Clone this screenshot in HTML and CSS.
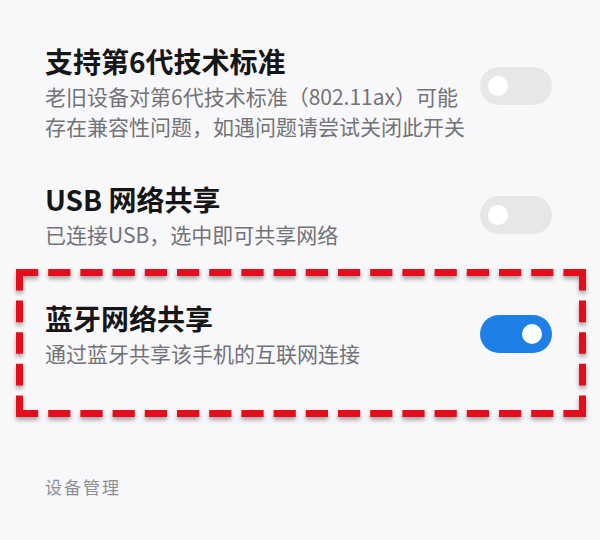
FILE: index.html
```html
<!DOCTYPE html>
<html lang="zh-CN">
<head>
<meta charset="utf-8">
<title>连接与共享</title>
<link rel="stylesheet" href="styles.css">
</head>
<body>
<main class="settings">
  <div class="row">
    <div class="text">
      <div class="title">支持第6代技术标准</div>
      <div class="desc">老旧设备对第6代技术标准（802.11ax）可能<br>存在兼容性问题，如遇问题请尝试关闭此开关</div>
    </div>
    <span class="switch switch-raised"><span class="knob"></span></span>
  </div>

  <div class="row">
    <div class="text">
      <div class="title">USB 网络共享</div>
      <div class="desc">已连接USB，选中即可共享网络</div>
    </div>
    <span class="switch"><span class="knob"></span></span>
  </div>

  <div class="row row-marked">
    <div class="text">
      <div class="title">蓝牙网络共享</div>
      <div class="desc">通过蓝牙共享该手机的互联网连接</div>
    </div>
    <span class="switch on"><span class="knob"></span></span>
    <svg class="mark" width="570" height="148" viewBox="0 0 570 148" aria-hidden="true">
      <g stroke="#e50d1c" stroke-width="7" fill="none">
        <line x1="0" y1="3.5" x2="570" y2="3.5" stroke-dasharray="22.2 10"/>
        <line x1="0" y1="144.5" x2="570" y2="144.5" stroke-dasharray="22.2 10"/>
        <line x1="3.5" y1="0" x2="3.5" y2="148" stroke-dasharray="21.6 10"/>
        <line x1="566.5" y1="0" x2="566.5" y2="148" stroke-dasharray="21.6 10"/>
      </g>
    </svg>
  </div>

  <div class="section">设备管理</div>
</main>
</body>
</html>
```

FILE: styles.css
```css
html, body {
  margin: 0;
  background: #f8f8fa;
}

body {
  width: 600px;
  height: 540px;
  overflow: hidden;
  font-family: "Noto Sans CJK SC", "Noto Sans", sans-serif;
}

.settings {
  display: flex;
  flex-direction: column;
  gap: 40px;
  padding: 43px 48px 0 45px;
}

.row {
  position: relative;
  display: flex;
  align-items: center;
  justify-content: space-between;
}

.row-marked {
  margin-top: 11px;
}

.text {
  display: flex;
  flex-direction: column;
  gap: 2px;
}

.title {
  font-size: 28px;
  line-height: 36px;
  font-weight: 600;
  color: #161616;
}

.desc {
  font-size: 21px;
  line-height: 30px;
  color: #727378;
}

.switch {
  position: relative;
  flex: none;
  width: 72px;
  height: 38px;
  border-radius: 19px;
  background: #e6e7e9;
}

.switch-raised {
  margin-bottom: 12px;
}

.knob {
  position: absolute;
  top: 9px;
  left: 8px;
  width: 20px;
  height: 20px;
  border-radius: 50%;
  background: #ffffff;
}

.switch.on {
  background: #1e7fe6;
}

.switch.on .knob {
  left: 42px;
}

/* red dashed callout drawn around the bluetooth row */
.mark {
  position: absolute;
  left: -29px;
  top: -31px;
  filter: drop-shadow(0 3px 2px rgba(60, 60, 60, 0.45));
  pointer-events: none;
}

.section {
  margin-top: 67px;
  font-size: 17px;
  line-height: 24px;
  letter-spacing: 2px;
  color: #8b8e99;
}
```
